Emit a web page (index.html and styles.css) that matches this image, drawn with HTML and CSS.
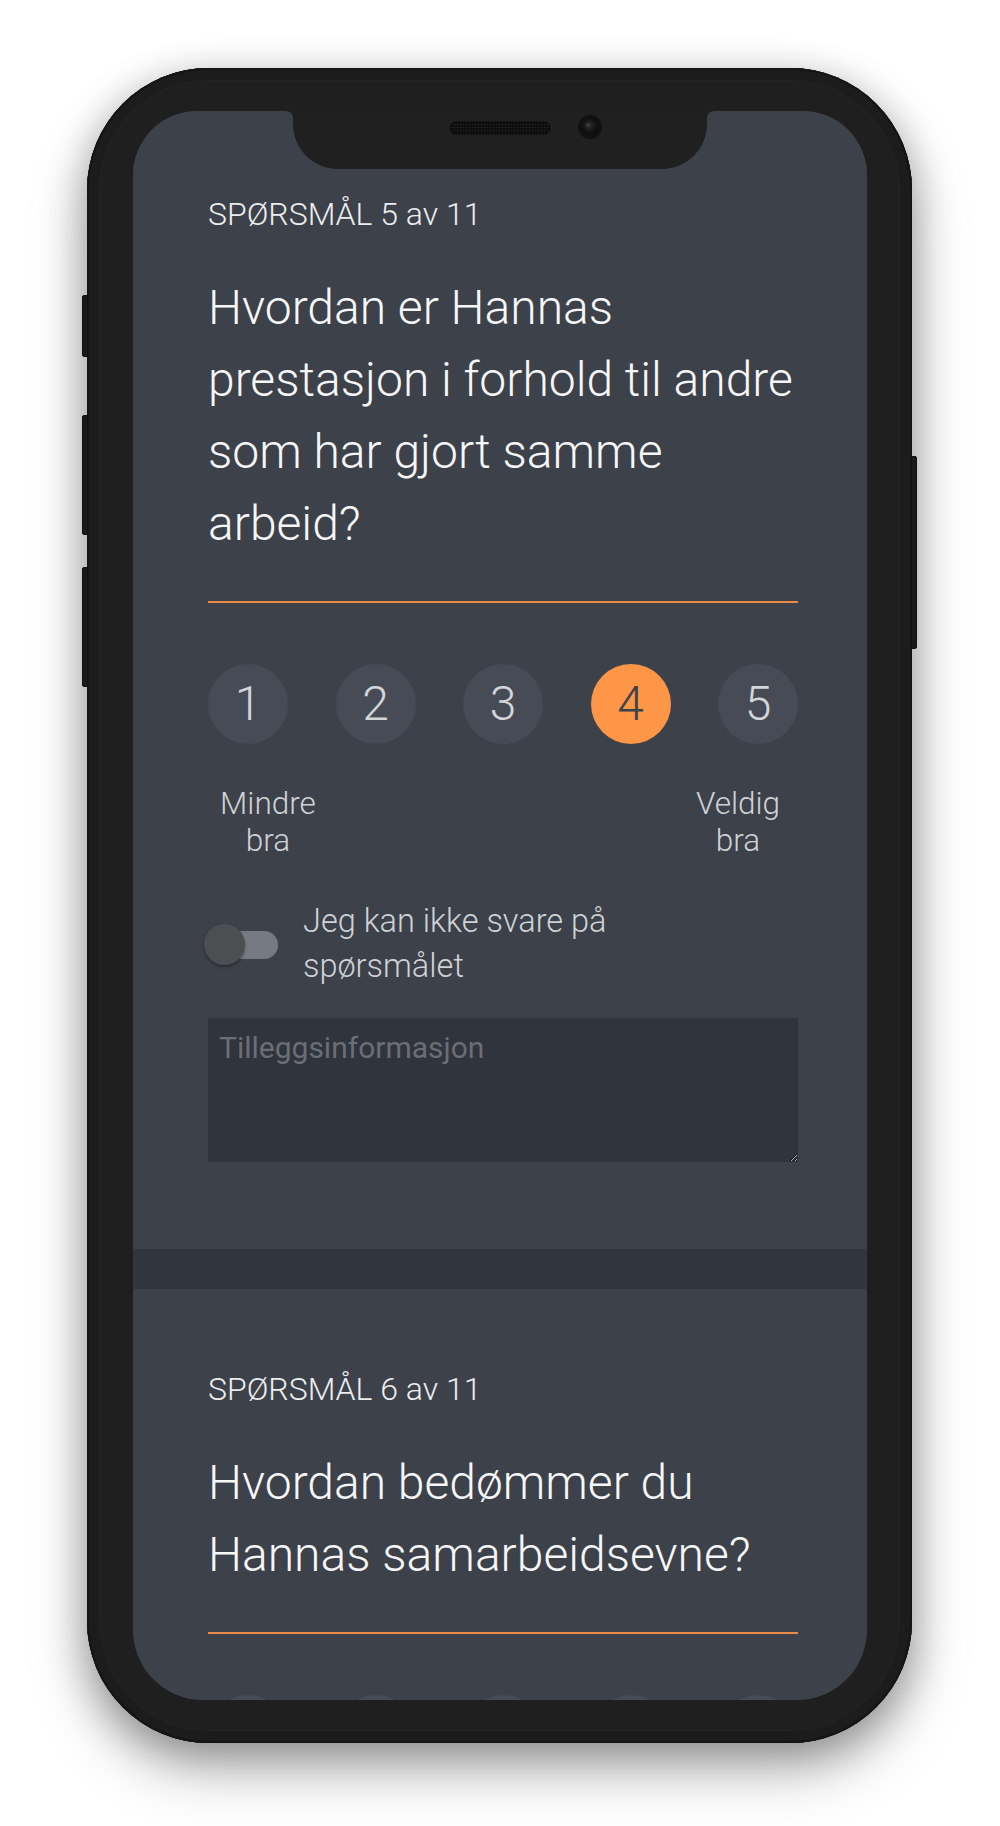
FILE: index.html
```html
<!DOCTYPE html>
<html lang="no">
<head>
<meta charset="utf-8">
<title>Spørsmål</title>
<link rel="stylesheet" href="styles.css">
</head>
<body>
<div class="stage">
  <div class="phone">
    <span class="side-btn mute"></span>
    <span class="side-btn vol-up"></span>
    <span class="side-btn vol-down"></span>
    <span class="side-btn power"></span>
    <div class="screen">
      <svg class="notch" width="430" height="58" viewBox="0 0 430 58">
        <defs>
          <radialGradient id="lens" cx="0.45" cy="0.4" r="0.6">
            <stop offset="0" stop-color="#2c2c2e"/>
            <stop offset="1" stop-color="#080808"/>
          </radialGradient>
          <pattern id="mesh" width="3" height="3" patternUnits="userSpaceOnUse">
            <rect width="3" height="3" fill="#0d0d0d"/>
            <circle cx="1.5" cy="1.5" r="0.8" fill="#242424"/>
          </pattern>
        </defs>
        <path d="M0 0 H430 Q422 0 422 8 V13 C422 37.8 401.8 58 377 58 H53 C28.2 58 8 37.8 8 13 V8 Q8 0 0 0 Z" fill="#202020"/>
        <rect x="165" y="11" width="100" height="12" rx="6" fill="url(#mesh)" stroke="#0a0a0a" stroke-width="1"/>
        <circle cx="305" cy="16" r="12" fill="#111"/>
        <circle cx="305" cy="16" r="8" fill="url(#lens)"/>
        <circle cx="303" cy="14" r="2" fill="#3a3a3c"/>
      </svg>

      <section class="question first">
        <div class="q-label">SPØRSMÅL 5 av 11</div>
        <h2 class="q-title">Hvordan er Hannas prestasjon i forhold til andre som har gjort samme arbeid?</h2>
        <div class="scale">
          <span class="dot">1</span>
          <span class="dot">2</span>
          <span class="dot">3</span>
          <span class="dot active">4</span>
          <span class="dot">5</span>
        </div>
        <div class="scale-labels">
          <span class="scale-label">Mindre bra</span>
          <span class="scale-label">Veldig bra</span>
        </div>
        <div class="toggle">
          <span class="switch"><span class="track"></span><span class="thumb"></span></span>
          <span class="toggle-text">Jeg kan ikke svare på spørsmålet</span>
        </div>
        <textarea class="extra" placeholder="Tilleggsinformasjon"></textarea>
      </section>

      <div class="band"></div>

      <section class="question second">
        <div class="q-label">SPØRSMÅL 6 av 11</div>
        <h2 class="q-title">Hvordan bedømmer du Hannas samarbeidsevne?</h2>
        <div class="scale">
          <span class="dot"></span>
          <span class="dot"></span>
          <span class="dot"></span>
          <span class="dot"></span>
          <span class="dot"></span>
        </div>
      </section>
    </div>
  </div>
</div>
</body>
</html>
```

FILE: styles.css
```css
html, body {
  margin: 0;
  padding: 0;
  background: #ffffff;
}

body {
  font-family: Roboto, "Liberation Sans", sans-serif;
}

.stage {
  padding: 68px 0 0 87px;
  height: 1758px;
}

.phone {
  position: relative;
  box-sizing: border-box;
  width: 825px;
  height: 1675px;
  padding: 43px 45px 43px 46px;
  background: #1f1f1f;
  border-radius: 122px;
  box-shadow:
    inset 0 0 0 2px #151515,
    inset 0 0 0 12px #1c1c1c,
    inset 0 0 0 13px #242424,
    0 12px 40px rgba(0, 0, 0, 0.32),
    0 30px 60px rgba(0, 0, 0, 0.22);
}

.side-btn {
  position: absolute;
  background: #1a1a1a;
  box-shadow: inset 0 0 0 1px #111;
}

.mute,
.vol-up,
.vol-down {
  left: -5px;
  width: 6px;
  border-radius: 3px 0 0 3px;
}

.mute { top: 227px; height: 62px; }
.vol-up { top: 347px; height: 120px; }
.vol-down { top: 499px; height: 120px; }

.power {
  right: -5px;
  width: 6px;
  top: 388px;
  height: 193px;
  border-radius: 0 3px 3px 0;
}

.screen {
  position: relative;
  width: 734px;
  height: 1589px;
  overflow: hidden;
  background: #3c414a;
  border-radius: 64px 64px 70px 70px;
}

.notch {
  position: absolute;
  top: 0;
  left: 152px;
  display: block;
}

.question {
  padding: 0 69px 0 75px;
}

.question.first {
  padding-top: 85px;
  padding-bottom: 87px;
}

.question.second {
  padding-top: 82px;
}

.q-label {
  font-size: 32px;
  line-height: 36px;
  font-weight: 300;
  color: #eceded;
}

.q-title {
  margin: 40px 0 0;
  padding-bottom: 41px;
  border-bottom: 2px solid #e98b47;
  font-size: 48px;
  line-height: 72px;
  font-weight: 300;
  color: #f6f6f7;
}

.scale {
  margin-top: 61px;
  display: flex;
  justify-content: space-between;
}

.dot {
  width: 80px;
  height: 80px;
  border-radius: 50%;
  background: #464b56;
  color: #d3d5d8;
  font-size: 48px;
  font-weight: 300;
  line-height: 80px;
  text-align: center;
}

.dot.active {
  background: #fd9647;
  color: #3d424b;
}

.scale-labels {
  margin-top: 41px;
  display: flex;
  justify-content: space-between;
}

.scale-label {
  width: 120px;
  text-align: center;
  font-size: 31.5px;
  line-height: 37px;
  font-weight: 300;
  color: #d0d2d5;
}

.toggle {
  margin-top: 40px;
  display: flex;
  align-items: center;
}

.switch {
  position: relative;
  flex: none;
  width: 74px;
  height: 41px;
  margin-left: -4px;
  margin-right: 25px;
}

.track {
  position: absolute;
  left: 6px;
  top: 7px;
  width: 68px;
  height: 28px;
  border-radius: 14px;
  background: #767a83;
}

.thumb {
  position: absolute;
  left: 0;
  top: 0;
  width: 41px;
  height: 41px;
  border-radius: 50%;
  background: #4d4e51;
  box-shadow: 0 2px 3px rgba(0, 0, 0, 0.35);
}

.toggle-text {
  max-width: 340px;
  font-size: 32.5px;
  line-height: 45px;
  font-weight: 300;
  color: #d0d2d5;
}

.extra {
  display: block;
  box-sizing: border-box;
  width: 100%;
  height: 144px;
  margin: 29px 0 0;
  padding: 12px 11px;
  border: 0;
  border-radius: 0;
  outline: none;
  background: #30343c;
  color: #d0d2d5;
  font-family: Roboto, "Liberation Sans", sans-serif;
  font-size: 30px;
  line-height: 36px;
}

.extra::placeholder {
  color: #6b6e74;
}

.band {
  height: 40px;
  background: #31353d;
}
```
